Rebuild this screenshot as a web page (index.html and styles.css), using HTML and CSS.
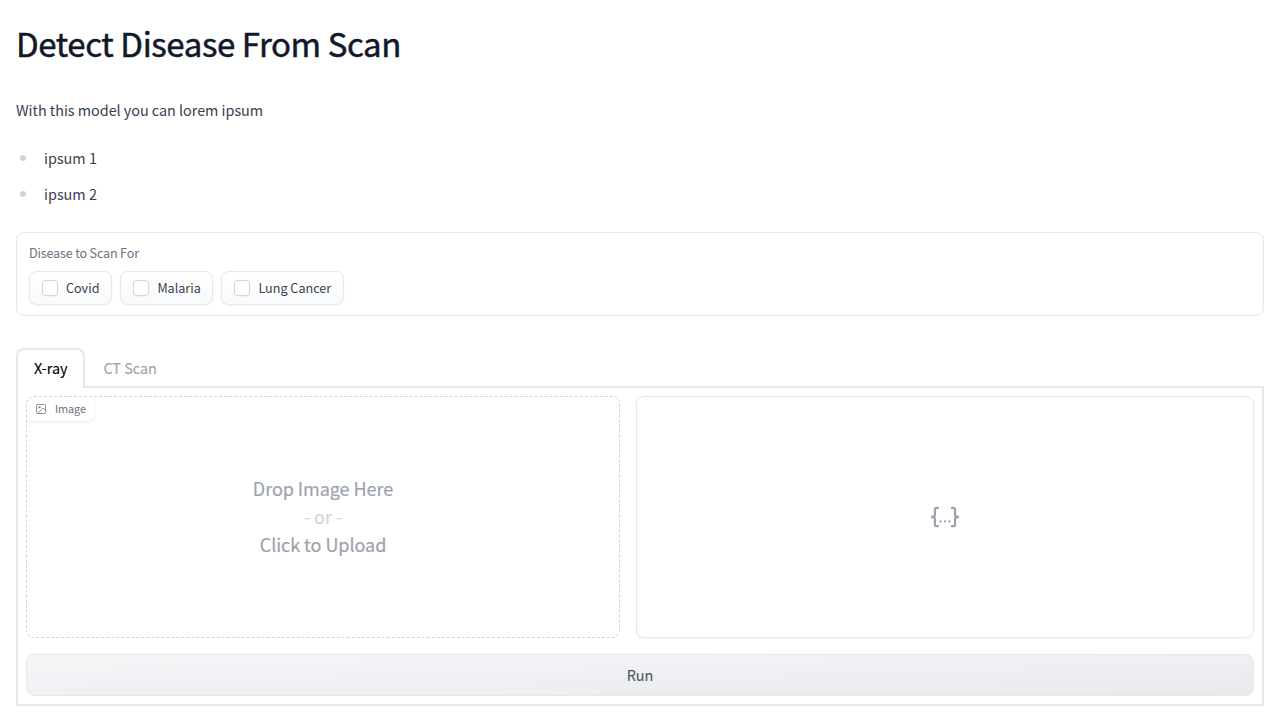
FILE: index.html
```html
<!DOCTYPE html>
<html lang="en">
<head>
<meta charset="utf-8">
<title>Detect Disease From Scan</title>
<link rel="stylesheet" href="styles.css">
</head>
<body>
<main class="app">
  <section class="prose">
    <h1 class="title"><span>Detect Disease From Scan</span></h1>
    <p class="intro"><span>With this model you can lorem ipsum</span></p>
    <ul class="list">
      <li class="item"><span>ipsum 1</span></li>
      <li class="item"><span>ipsum 2</span></li>
    </ul>
  </section>
  <section class="diseases">
    <div class="caption"><span>Disease to Scan For</span></div>
    <div class="options">
      <div class="option"><i class="box"></i><span>Covid</span></div>
      <div class="option malaria"><i class="box"></i><span>Malaria</span></div>
      <div class="option lung"><i class="box"></i><span>Lung Cancer</span></div>
    </div>
  </section>
  <section class="tabs">
    <nav class="tab-nav">
      <div class="tab selected"><span>X-ray</span></div>
      <div class="tab"><span>CT Scan</span></div>
    </nav>
    <div class="panel">
      <div class="row">
        <div class="drop">
          <div class="badge">
            <svg class="badge-icon" viewBox="0 0 24 24" fill="none" stroke="currentColor" stroke-width="1.5" stroke-linecap="round" stroke-linejoin="round"><rect x="3" y="3" width="18" height="18" rx="2"/><circle cx="8.5" cy="8.5" r="1.5"/><path d="M21 15l-5-5L5 21"/></svg>
            <span>Image</span>
          </div>
          <div class="drop-line"><span>Drop Image Here</span></div>
          <div class="drop-line or"><span>- or -</span></div>
          <div class="drop-line"><span>Click to Upload</span></div>
        </div>
        <div class="output">
          <svg class="json-icon" viewBox="0 0 32 32" fill="none" stroke="currentColor" stroke-width="2.6"><path d="M9 5.500H6.500a2 2 0 0 0-2 2V13c0 2-1 3-3 3H0h1.500c2 0 3 1 3 3v5.500a2 2 0 0 0 2 2H9M23 5.500h2.500a2 2 0 0 1 2 2V13c0 2 1 3 3 3H32h-1.500c-2 0-3 1-3 3v5.500a2 2 0 0 1-2 2H23"/><g fill="currentColor" stroke="none"><circle cx="11" cy="21" r="1.3"/><circle cx="16" cy="21" r="1.3"/><circle cx="21" cy="21" r="1.3"/></g></svg>
        </div>
      </div>
      <button class="run"><span>Run</span></button>
    </div>
  </section>
</main>
</body>
</html>
```
FILE: styles.css
```css
* { box-sizing: border-box; margin: 0; padding: 0; }
body {
  background: #fff;
  color: #374151;
  font-family: "Source Sans Pro", "Noto Sans CJK SC", "Noto Sans", sans-serif;
  font-size: 14.4px;
  line-height: 24px;
  white-space: nowrap;
}
.app { padding: 23px 16px 0; }
.title { font-size: 33px; line-height: 40px; font-weight: 400; letter-spacing: -0.4px; color: #111827; -webkit-text-stroke: 0.5px #111827; }
.intro { margin-top: 35px; letter-spacing: -0.03px; }
.list { list-style: none; margin-top: 24px; }
.item { display: flex; align-items: center; height: 24px; margin-bottom: 12px; }
.item::before { content: ""; width: 6px; height: 6px; margin: 0 18px 0 4px; border-radius: 50%; background: #d1d5db; }
.diseases { margin-top: 26px; height: 84px; padding: 10px 12px; border: 1px solid #e5e7eb; border-radius: 8px; }
.caption { font-size: 12.6px; line-height: 20px; letter-spacing: -0.18px; color: #6b7280; }
.options { display: flex; gap: 8px; margin-top: 8px; }
.option {
  display: flex; align-items: center; gap: 8px;
  width: 83.4px; height: 34px; padding-left: 12px;
  font-size: 12.6px; line-height: 20px; color: #374151;
  border: 1px solid #e5e7eb; border-radius: 8px;
  background: linear-gradient(#fff, #f9fafb);
  box-shadow: 0 1px 2px rgba(0,0,0,.05);
}
.malaria { width: 93px; }
.lung { width: 122.6px; }
.box { width: 16px; height: 16px; border: 1px solid #d1d5db; border-radius: 4px; background: #fff; box-shadow: 0 1px 2px rgba(0,0,0,.05); }
.tabs { margin-top: 32px; }
.tab-nav { display: flex; height: 40px; border-bottom: 2px solid #e5e7eb; }
.tab { height: 40px; padding: 8px 16px 0 18px; color: #9ca3af; -webkit-text-stroke: 0.1px currentColor; }
.selected { width: 69.4px; padding: 6px 16px 0; color: #000; background: #fff; border: 2px solid #e5e7eb; border-bottom: 0; border-radius: 8px 8px 0 0; }
.panel { height: 318px; padding: 8px; border: 2px solid #e5e7eb; border-top: 0; }
.row { display: flex; gap: 16px; height: 242px; }
.drop {
  position: relative; display: flex; flex-direction: column; align-items: center; justify-content: center;
  width: 594px; padding-bottom: 2px; border: 1px dashed #d1d5db; border-radius: 8px;
  font-size: 18px; line-height: 28px; letter-spacing: -0.05px; color: #9ca3af;
  -webkit-text-stroke: 0.2px currentColor;
}
.or { color: #d1d5db; -webkit-text-stroke-color: #d1d5db; }
.badge {
  position: absolute; top: 0; left: 0; display: flex; align-items: center; gap: 8px;
  width: 68px; height: 25px; padding-left: 8px;
  font-size: 10.8px; line-height: 16px; color: #6b7280;
  border: solid #f3f4f6; border-width: 0 1px 1px 0; border-radius: 7px 0 8px 0;
  box-shadow: 0 1px 2px rgba(0,0,0,.05);
  -webkit-text-stroke-width: 0;
}
.badge span { padding-bottom: 2px; }
.badge-icon { width: 12px; height: 12px; }
.output { display: flex; flex: 1; align-items: center; justify-content: center; border: 1px solid #e5e7eb; border-radius: 8px; box-shadow: 0 1px 2px rgba(0,0,0,.05); color: #9ca3af; }
.json-icon { width: 28px; height: 28px; }
.run {
  display: block; width: 100%; height: 42px; margin-top: 16px;
  font: inherit; color: #4b5563; border: 1px solid #e5e7eb; border-radius: 8px;
  background: linear-gradient(to bottom right, #f5f6f8, #e9eaee);
  -webkit-text-stroke: 0.1px currentColor;
}
```
